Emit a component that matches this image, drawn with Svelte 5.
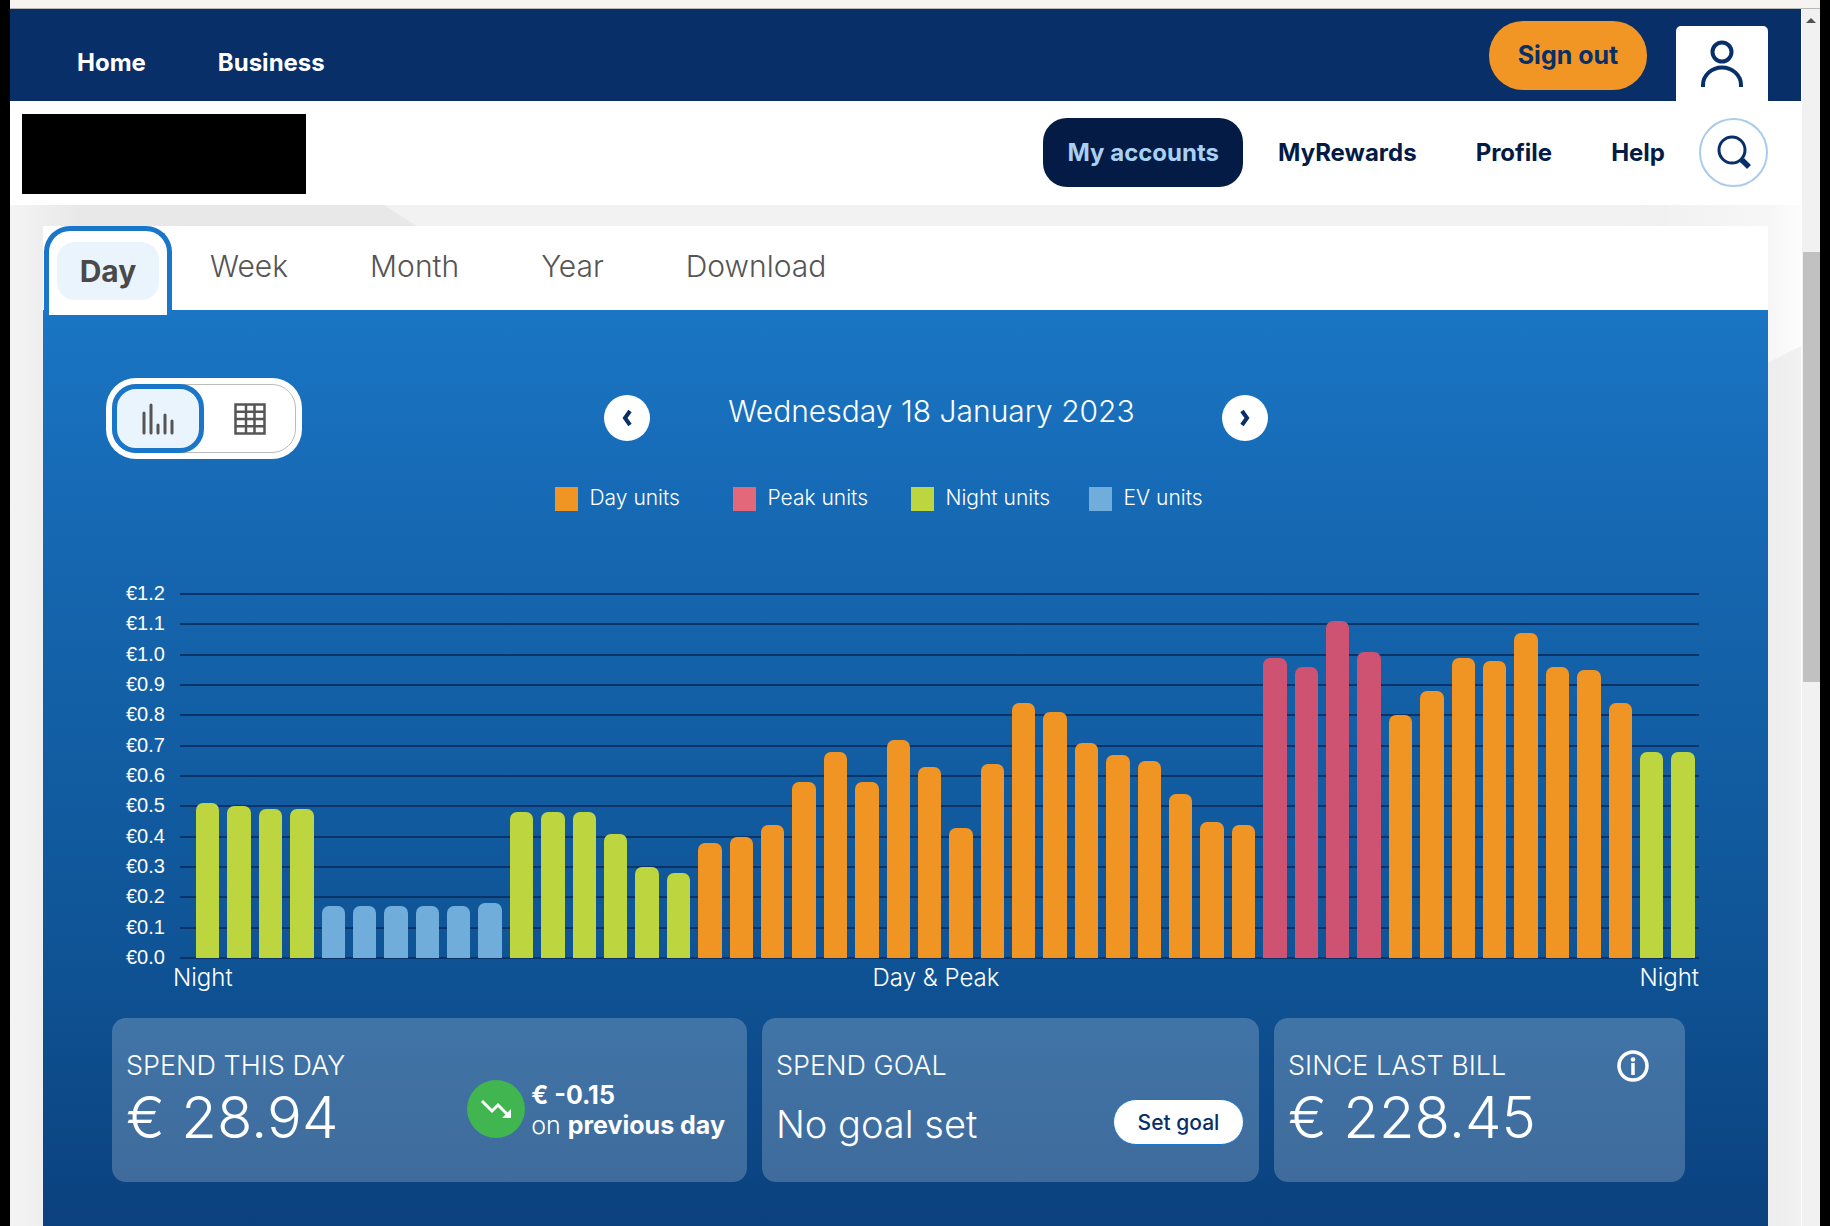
<script>
  const tabs = ['Week', 'Month', 'Year', 'Download'];
  const legend = [
    ['day', 'Day units'],
    ['peak', 'Peak units'],
    ['night', 'Night units'],
    ['ev', 'EV units']
  ];
  const ticks = Array.from({ length: 13 }, (_, i) => '€' + ((12 - i) / 10).toFixed(1));
  const runs = [
    ['night', [0.51, 0.5, 0.49, 0.49]],
    ['ev', [0.17, 0.17, 0.17, 0.17, 0.17, 0.18]],
    ['night', [0.48, 0.48, 0.48, 0.41, 0.3, 0.28]],
    ['day', [0.38, 0.4, 0.44, 0.58, 0.68, 0.58, 0.72, 0.63, 0.43, 0.64, 0.84, 0.81, 0.71, 0.67, 0.65, 0.54, 0.45, 0.44]],
    ['peak', [0.99, 0.96, 1.11, 1.01]],
    ['day', [0.8, 0.88, 0.99, 0.98, 1.07, 0.96, 0.95, 0.84]],
    ['night', [0.68, 0.68]]
  ];
  const bars = runs.flatMap(([kind, values]) => values.map((value) => ({ kind, value })));
</script>

<div class="window">
  <div class="chrome-strip"></div>
  <div class="viewport">
    <div class="page">
      <header>
        <div class="topbar">
          <nav class="site-nav" aria-label="Site">
            <a href="#home">Home</a>
            <a href="#business">Business</a>
          </nav>
          <button class="signout">Sign out</button>
          <a class="user" href="#account" aria-label="Account">
            <svg width="44" height="48" viewBox="0 0 44 48" fill="none" stroke="#082f68" stroke-width="4">
              <circle cx="22" cy="12" r="9.5" />
              <path d="M3 47v-2a19 17.500 0 0 1 38 0v2" />
            </svg>
          </a>
        </div>
        <div class="mainbar">
          <div class="logo"></div>
          <nav class="account-nav" aria-label="Account">
            <a class="current" href="#accounts">My accounts</a>
            <a href="#rewards">MyRewards</a>
            <a href="#profile">Profile</a>
            <a href="#help">Help</a>
          </nav>
          <button class="search" aria-label="Search">
            <svg width="36" height="36" viewBox="0 0 36 36" fill="none" stroke="#082f68">
              <circle cx="16" cy="16" r="13" stroke-width="3" />
              <path d="M24 25l3 3" stroke-width="4" />
              <path d="M26 26l7 7" stroke-width="5.500" />
            </svg>
          </button>
        </div>
      </header>

      <main>
        <section class="panel">
          <div class="tabs" role="tablist">
            <button class="tab active" role="tab" aria-selected="true"><span>Day</span></button>
            {#each tabs as tab}
              <button class="tab" role="tab" aria-selected="false">{tab}</button>
            {/each}
          </div>

          <div class="usage">
            <div class="controls">
              <div class="toggle">
                <div class="toggle-inner">
                  <button class="view on" aria-label="Chart view">
                    <svg width="34" height="34" viewBox="0 0 34 34" stroke="#555" stroke-width="3" stroke-linecap="round">
                      <path d="M3 11v20M10 3v28M17 23v8M24 13v18M31 19v12" />
                    </svg>
                  </button>
                  <button class="view" aria-label="Table view">
                    <svg width="32" height="32" viewBox="0 0 32 32" fill="none" stroke="#555" stroke-width="2.500">
                      <path d="M1.500 1.500h29v29h-29zM1.500 8.700h29M1.500 16h29M1.500 23.300h29M12 1.500v29M20.500 1.500v29" />
                    </svg>
                  </button>
                </div>
              </div>
              <div class="date">
                <button class="arrow" aria-label="Previous day">
                  <svg width="12" height="18" viewBox="0 0 12 18" fill="none" stroke="#082f68" stroke-width="4"><path d="M9 2L4 9l5 7" /></svg>
                </button>
                <h1>Wednesday 18 January 2023</h1>
                <button class="arrow" aria-label="Next day">
                  <svg width="12" height="18" viewBox="0 0 12 18" fill="none" stroke="#082f68" stroke-width="4"><path d="M3 2l5 7-5 7" /></svg>
                </button>
              </div>
            </div>

            <ul class="legend">
              {#each legend as [kind, label]}
                <li><i class={kind}></i>{label}</li>
              {/each}
            </ul>

            <div class="chart">
              <div class="ticks">
                {#each ticks as tick}<span>{tick}</span>{/each}
              </div>
              <div class="plot">
                <div class="gridlines">
                  {#each ticks as tick}<i></i>{/each}
                </div>
                <div class="bars">
                  {#each bars as bar}
                    <div class="bar {bar.kind}" style="height: {(bar.value / 1.2) * 100}%"></div>
                  {/each}
                </div>
              </div>
            </div>
            <div class="periods"><span>Night</span><span>Day &amp; Peak</span><span>Night</span></div>

            <div class="cards">
              <article class="card">
                <div>
                  <h2>SPEND THIS DAY</h2>
                  <p class="amount">€ 28.94</p>
                </div>
                <div class="trend">
                  <svg width="58" height="58" viewBox="0 0 58 58">
                    <circle cx="29" cy="29" r="29" fill="#40b550" />
                    <path d="M15 21l10 10 6-6 10 10" fill="none" stroke="#fff" stroke-width="3" />
                    <path d="M44 29v9h-9z" fill="#fff" />
                  </svg>
                  <p><b>€ -0.15</b><br />on <b>previous day</b></p>
                </div>
              </article>
              <article class="card goal">
                <div>
                  <h2>SPEND GOAL</h2>
                  <p class="status">No goal set</p>
                </div>
                <button class="set">Set goal</button>
              </article>
              <article class="card bill">
                <div>
                  <h2>SINCE LAST BILL</h2>
                  <p class="amount">€ 228.45</p>
                </div>
                <button class="info" aria-label="About this amount">
                  <svg width="32" height="32" viewBox="0 0 32 32" fill="none" stroke="#fff" stroke-width="3.500">
                    <circle cx="16" cy="16" r="14" />
                    <path d="M16 13v12" />
                    <circle cx="16" cy="9.500" r="2.300" fill="#fff" stroke="none" />
                  </svg>
                </button>
              </article>
            </div>
          </div>
        </section>
      </main>
    </div>
    <div class="scrollbar"><i class="up"></i><i class="thumb"></i></div>
  </div>
</div>

<style>
  :global(body) { margin: 0; background: #000; }
  * { box-sizing: border-box; }
  button { font: inherit; color: inherit; border: 0; padding: 0; background: none; cursor: pointer; }
  a { color: inherit; text-decoration: none; }
  h1, h2, p, ul { margin: 0; padding: 0; font-weight: 300; }
  svg { display: block; flex: none; }

  .window { height: 100vh; overflow: hidden; display: flex; flex-direction: column; padding: 0 10px; background: #000; font-family: Inter, sans-serif; }
  .chrome-strip { flex: none; height: 9px; background: #f7f3f0; border-bottom: 1px solid #b8b8b8; }
  .viewport { flex: 1; min-height: 0; display: flex; }
  .page { flex: 1; min-width: 0; overflow: hidden; background: #f1f1f1; }

  .topbar { display: flex; height: 92px; padding-right: 33px; background: #082f68; color: #fff; }
  .site-nav { display: flex; gap: 72px; margin-right: auto; padding: 40px 0 0 67px; font-size: 24px; line-height: 28px; font-weight: 700; }
  .signout { width: 158px; height: 69px; margin: 12px 29px 0 0; padding-bottom: 2px; border-radius: 34px; background: #f19525; color: #082f68; font-size: 25px; font-weight: 700; }
  .user { display: flex; justify-content: center; width: 92px; margin-top: 17px; padding-top: 14px; border-radius: 5px 5px 0 0; background: #fff; }

  .mainbar { display: flex; align-items: center; height: 104px; padding: 0 33px 0 12px; background: #fff; }
  .logo { width: 284px; height: 80px; margin: 2px auto 0 0; background: #000; }
  .account-nav { display: flex; align-items: center; gap: 59px; margin: 0 34px 2px 0; color: #031b45; font-size: 24px; font-weight: 700; }
  .current { display: flex; align-items: center; height: 69px; margin-right: -24px; padding: 0 24px; border-radius: 24px; background: #031b45; color: #a9d0f3; }
  .search { display: grid; place-items: center; width: 69px; height: 69px; margin-bottom: 2px; border: 2px solid #aaccec; border-radius: 50%; }

  main { position: relative; padding: 21px 33px 0; background: linear-gradient(90deg, #f2f2f2 90%, #ededed 98%, #f1f1f1); }
  main::before { content: ""; position: absolute; inset: 0 auto 0 0; width: 407px; background: linear-gradient(90deg, #f4f4f4, #e8e8e8 70px); clip-path: polygon(0 0, 374px 0, 407px 21px, 407px 100%, 0 100%); }
  main::after { content: ""; position: absolute; top: 0; right: 0; width: 133px; height: 175px; background: linear-gradient(90deg, #f2f2f2, #f6f6f6 100px, #fdfdfd); clip-path: polygon(0 0, 100% 0, 100% 141px, 100px 158px, 0 158px); }
  .panel { position: relative; z-index: 1; }
  .tabs { display: flex; height: 84px; background: #fff; color: #555; font-size: 30px; font-weight: 300; }
  .tab { margin-left: 82px; padding-bottom: 5px; }
  .tab.active { height: 89px; margin: 0 -44px 0 1px; padding: 11px 8px 15px; border: 5px solid #1976c8; border-width: 5px 5px 0; border-radius: 26px 26px 0 0; background: #fff; z-index: 1; }
  .active span { display: grid; place-items: center; width: 102px; height: 58px; border-radius: 18px; background: #eaf4fd; color: #4a4a4a; font-weight: 700; }

  .usage { height: 1000px; padding: 68px 69px 0 63px; background: linear-gradient(#1a75c4, #1565ae 270px, #0f5496 640px, #0b417e 916px); color: #fff; }
  .controls { display: grid; grid-template-columns: 196px 1fr 130px; }
  .toggle { height: 81px; padding: 6px; border-radius: 30px; background: #fff; }
  .toggle-inner { display: flex; height: 69px; border: 1px solid #bbb; border-radius: 24px; }
  .view { display: grid; place-items: center; flex: 1; }
  .view.on { flex: 0 0 92px; margin: -1px 0 -1px -1px; border: 5px solid #1976c8; border-radius: 24px; background: #eaf4fd; }
  .date { display: flex; justify-content: space-between; align-items: center; width: 664px; max-width: 100%; margin: 0 auto; padding-bottom: 2px; }
  .arrow { display: grid; place-items: center; width: 46px; height: 46px; border-radius: 50%; background: #fff; }
  h1 { padding: 0 8px 14px 0; font-size: 30px; line-height: 36px; }
  .legend { display: grid; grid-template-columns: repeat(4, 178px); justify-content: center; margin-top: 28px; padding-left: 16px; list-style: none; font-size: 21px; line-height: 22px; }
  .legend li { display: flex; gap: 12px; }
  .legend i { width: 23px; height: 24px; }
  .day { background: #f09524; }
  .peak { background: #ce5271; }
  .legend .peak { background: #e36879; }
  .night { background: #bdd640; }
  .ev { background: #70addb; }

  .chart { display: flex; gap: 15px; margin: 70px 0 -5px; padding-left: 20px; }
  .ticks { display: flex; flex-direction: column; justify-content: space-between; height: 388px; font: 20px/24px "Liberation Sans", sans-serif; }
  .plot { flex: 1; display: grid; height: 366px; margin-top: 12px; }
  .gridlines, .bars { grid-area: 1 / 1; min-height: 0; }
  .gridlines { display: flex; flex-direction: column; justify-content: space-between; }
  .gridlines i { height: 2px; background: #0a3468; }
  .bars { display: flex; align-items: flex-end; gap: 8px; padding: 1px 4px 1px 16px; }
  .bar { flex: 1; border-radius: 7px 7px 0 0; }
  .periods { display: flex; justify-content: space-between; padding-left: 67px; font-size: 24px; line-height: 28px; font-weight: 300; }

  .cards { display: grid; grid-template-columns: 635fr 497fr 411fr; gap: 15px; margin: 26px 14px 0 6px; }
  .card { display: flex; justify-content: space-between; height: 164px; padding: 32px 25px 0 14px; border-radius: 14px; background: rgba(255, 255, 255, 0.21); }
  h2 { font-size: 27px; line-height: 32px; }
  .amount { font-size: 58px; line-height: 70px; }
  .status { margin-top: 12px; font-size: 38px; line-height: 60px; }
  .trend { display: flex; align-items: center; gap: 6px; height: 60px; margin-top: 29px; font-size: 25px; line-height: 30px; }
  .trend p { padding-top: 2px; }
  .trend b { font-weight: 700; }
  .card:first-child { padding-right: 22px; }
  .goal { padding-right: 15px; }
  .set { width: 131px; height: 46px; margin-top: 49px; border: 1px solid #1976c8; border-radius: 23px; background: #fff; color: #082f68; font-size: 21px; font-weight: 500; }
  .bill { padding-right: 36px; }
  .info { align-self: flex-start; }

  .scrollbar { width: 19px; background: #f1f1f1; border-left: 1px solid #fff; }
  .up { display: block; width: 0; margin: 9px auto 0; border: 5px solid transparent; border-top: 0; border-bottom-color: #505050; }
  .thumb { display: block; height: 430px; margin: 229px 0 0 1px; background: #c1c1c1; }
</style>
